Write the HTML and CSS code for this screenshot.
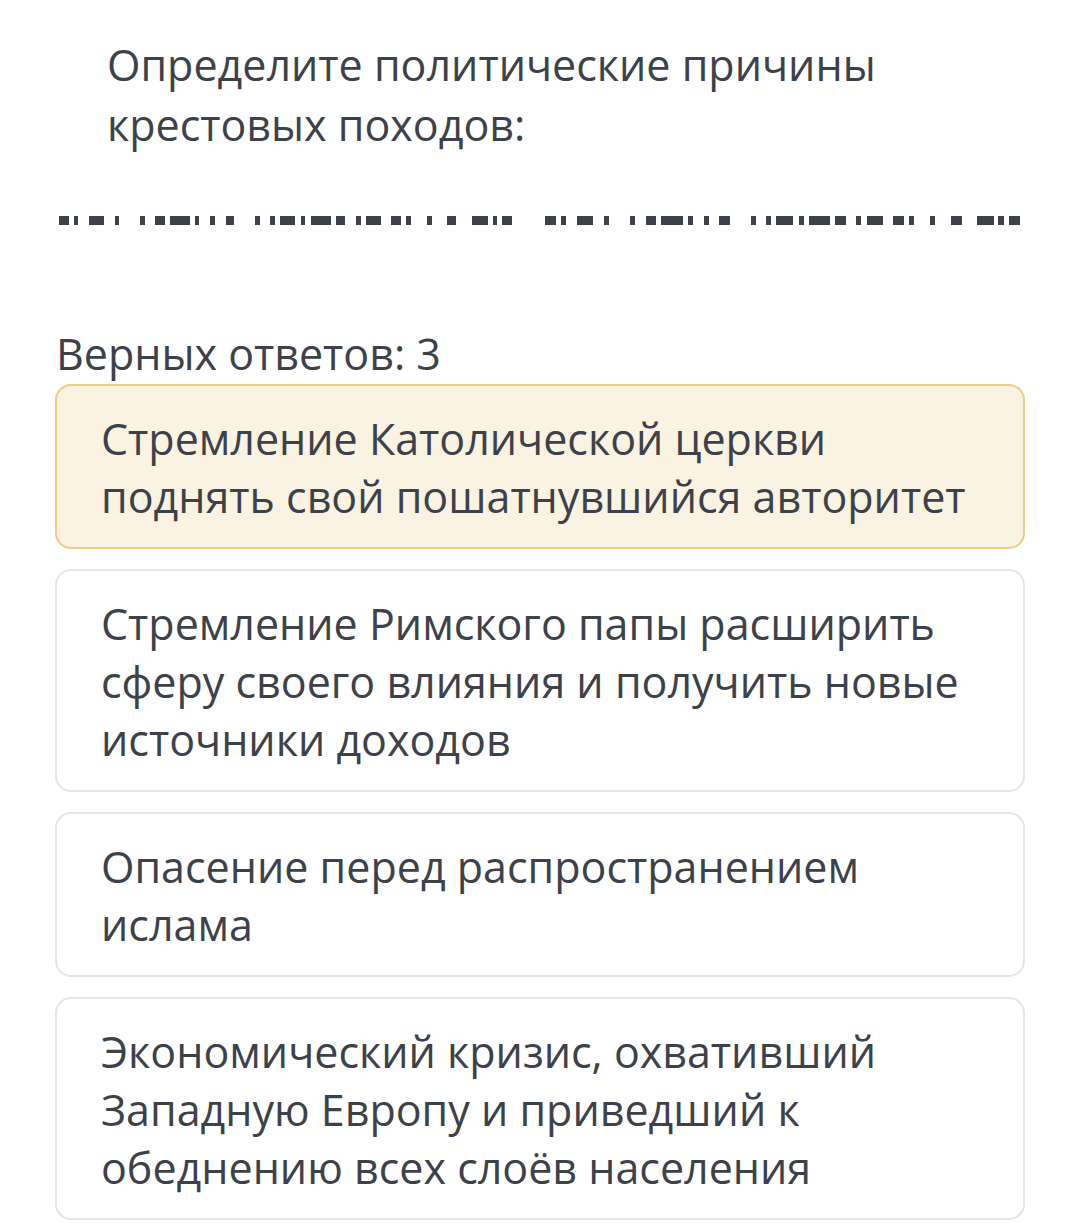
FILE: index.html
```html
<!DOCTYPE html>
<html lang="ru">
<head>
<meta charset="utf-8">
<link rel="stylesheet" href="styles.css">
</head>
<body>
<main class="page">
  <h1 class="question">Определите политические причины крестовых походов:</h1>
  <svg class="redacted" width="1080" height="20" viewBox="0 206 1080 20" aria-hidden="true">
    <g fill="#3d4149">
      <rect x="59" y="214" width="10" height="9"/><rect x="74" y="214" width="4" height="9"/>
      <rect x="89" y="214" width="15" height="9"/><rect x="115" y="214" width="4" height="9"/>
      <rect x="140" y="214" width="5" height="9"/><rect x="155" y="214" width="10" height="9"/>
      <rect x="170" y="214" width="20" height="9"/><rect x="195" y="214" width="4" height="9"/>
      <rect x="210" y="214" width="5" height="9"/><rect x="226" y="214" width="8" height="9"/>
      <rect x="255" y="214" width="5" height="9"/><rect x="270" y="214" width="5" height="9"/>
      <rect x="280" y="214" width="15" height="9"/><rect x="301" y="214" width="4" height="9"/>
      <rect x="311" y="214" width="20" height="9"/><rect x="336" y="214" width="9" height="9"/>
      <rect x="356" y="214" width="5" height="9"/><rect x="366" y="214" width="15" height="9"/>
      <rect x="391" y="214" width="10" height="9"/><rect x="406" y="214" width="5" height="9"/>
      <rect x="427" y="214" width="5" height="9"/><rect x="447" y="214" width="9" height="9"/>
      <rect x="472" y="214" width="16" height="9"/><rect x="493" y="214" width="4" height="9"/>
      <rect x="502" y="214" width="10" height="9"/>
      <rect x="545" y="214" width="11" height="9"/><rect x="561" y="214" width="5" height="9"/>
      <rect x="577" y="214" width="16" height="9"/><rect x="604" y="214" width="5" height="9"/>
      <rect x="630" y="214" width="5" height="9"/><rect x="646" y="214" width="10" height="9"/>
      <rect x="661" y="214" width="22" height="9"/><rect x="688" y="214" width="5" height="9"/>
      <rect x="704" y="214" width="5" height="9"/><rect x="719" y="214" width="11" height="9"/>
      <rect x="751" y="214" width="5" height="9"/><rect x="766" y="214" width="5" height="9"/>
      <rect x="776" y="214" width="17" height="9"/><rect x="799" y="214" width="5" height="9"/>
      <rect x="809" y="214" width="21" height="9"/><rect x="835" y="214" width="11" height="9"/>
      <rect x="856" y="214" width="5" height="9"/><rect x="867" y="214" width="16" height="9"/>
      <rect x="893" y="214" width="11" height="9"/><rect x="909" y="214" width="5" height="9"/>
      <rect x="930" y="214" width="5" height="9"/><rect x="951" y="214" width="11" height="9"/>
      <rect x="977" y="214" width="17" height="9"/><rect x="998" y="214" width="6" height="9"/>
      <rect x="1009" y="214" width="11" height="9"/>
    </g>
  </svg>
  <p class="count">Верных ответов: 3</p>
  <ul class="answers">
    <li class="answer answer--selected">Стремление Католической церкви поднять свой пошатнувшийся авторитет</li>
    <li class="answer">Стремление Римского папы расширить сферу своего влияния и получить новые источники доходов</li>
    <li class="answer">Опасение перед распространением ислама</li>
    <li class="answer">Экономический кризис, охвативший Западную Европу и приведший к обеднению всех слоёв населения</li>
  </ul>
</main>
</body>
</html>
```

FILE: styles.css
```css
html, body {
  margin: 0;
  padding: 0;
  background: #ffffff;
}

body {
  font-family: "Open Sans", "Noto Sans", "DejaVu Sans", sans-serif;
  color: #3d4149;
}

.page {
  width: 1080px;
  padding-top: 35px;
}

.question {
  margin: 0;
  padding: 0 150px 0 107px;
  font-size: 43px;
  font-weight: 400;
  line-height: 60px;
}

.redacted {
  display: block;
  margin-top: 53px;
}

.count {
  margin: 96px 0 0 56px;
  font-size: 43px;
  line-height: 60px;
}

.answers {
  list-style: none;
  margin: 0 0 0 55px;
  padding: 0;
  width: 970px;
  display: flex;
  flex-direction: column;
  gap: 20px;
}

.answer {
  box-sizing: border-box;
  border: 2px solid #e3e6e6;
  border-radius: 16px;
  background: #ffffff;
  padding: 24px 46px 21px 44px;
  font-size: 43px;
  line-height: 58px;
}

.answer--selected {
  background: #fbf3e1;
  border-color: #ebcd88;
}
```
